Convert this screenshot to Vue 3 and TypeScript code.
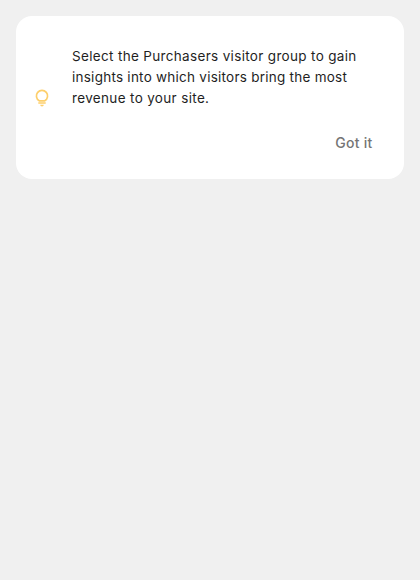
<script setup lang="ts">
interface Line {
  text: string
  tone: string
}

const lines: Line[] = [
  { text: 'Select the Purchasers visitor group to gain', tone: 'first' },
  { text: 'insights into which visitors bring the most', tone: 'second' },
  { text: 'revenue to your site.', tone: 'third' },
]
</script>

<template>
  <main class="page">
    <section class="card">
      <svg class="bulb" viewBox="0 0 20 20" aria-hidden="true">
        <path d="M7.2 12.8a5.6 5.6 0 1 1 5.6 0z" />
        <path class="cap" d="M6.3 14.3h7.4v1.5H6.3zM8.2 16.8h3.6a1.8 1.6 0 0 1-3.6 0z" />
      </svg>
      <div class="content">
        <p class="message">
          <span v-for="line in lines" :key="line.tone" class="line" :class="line.tone">{{ line.text }}</span>
        </p>
        <button class="action" type="button">Got it</button>
      </div>
    </section>
  </main>
</template>

<style>
body {
  background: #f0f0f0;
}
</style>

<style scoped>
.page {
  padding: 16px;
  font-family: Inter, "Liberation Sans", sans-serif;
}
.card {
  display: flex;
  align-items: flex-start;
  box-sizing: border-box;
  height: 163px;
  padding: 30px 16px 18px;
  border-radius: 16px;
  background: #fff;
}
.bulb {
  width: 20px;
  height: 20px;
  margin-top: 42px;
  fill: none;
  stroke: #fdcf6c;
  stroke-width: 1.7;
}
.cap {
  fill: #fdcf6c;
  stroke: none;
}
.content {
  display: flex;
  flex: 1;
  flex-direction: column;
  align-items: flex-end;
  gap: 16px;
  padding-left: 20px;
}
.message {
  width: 100%;
  margin: 0;
  color: #1f1f1f;
  font-size: 13.5px;
  line-height: 21px;
}
.line {
  display: block;
  white-space: nowrap;
}
.first {
  letter-spacing: 0.33px;
}
.second {
  letter-spacing: 0.25px;
}
.third {
  letter-spacing: 0.34px;
}
.action {
  border: 0;
  padding: 8px 15.5px 8px 16px;
  background: none;
  color: #757575;
  font: 500 14px/20px Inter, sans-serif;
  letter-spacing: 0.25px;
}
</style>
